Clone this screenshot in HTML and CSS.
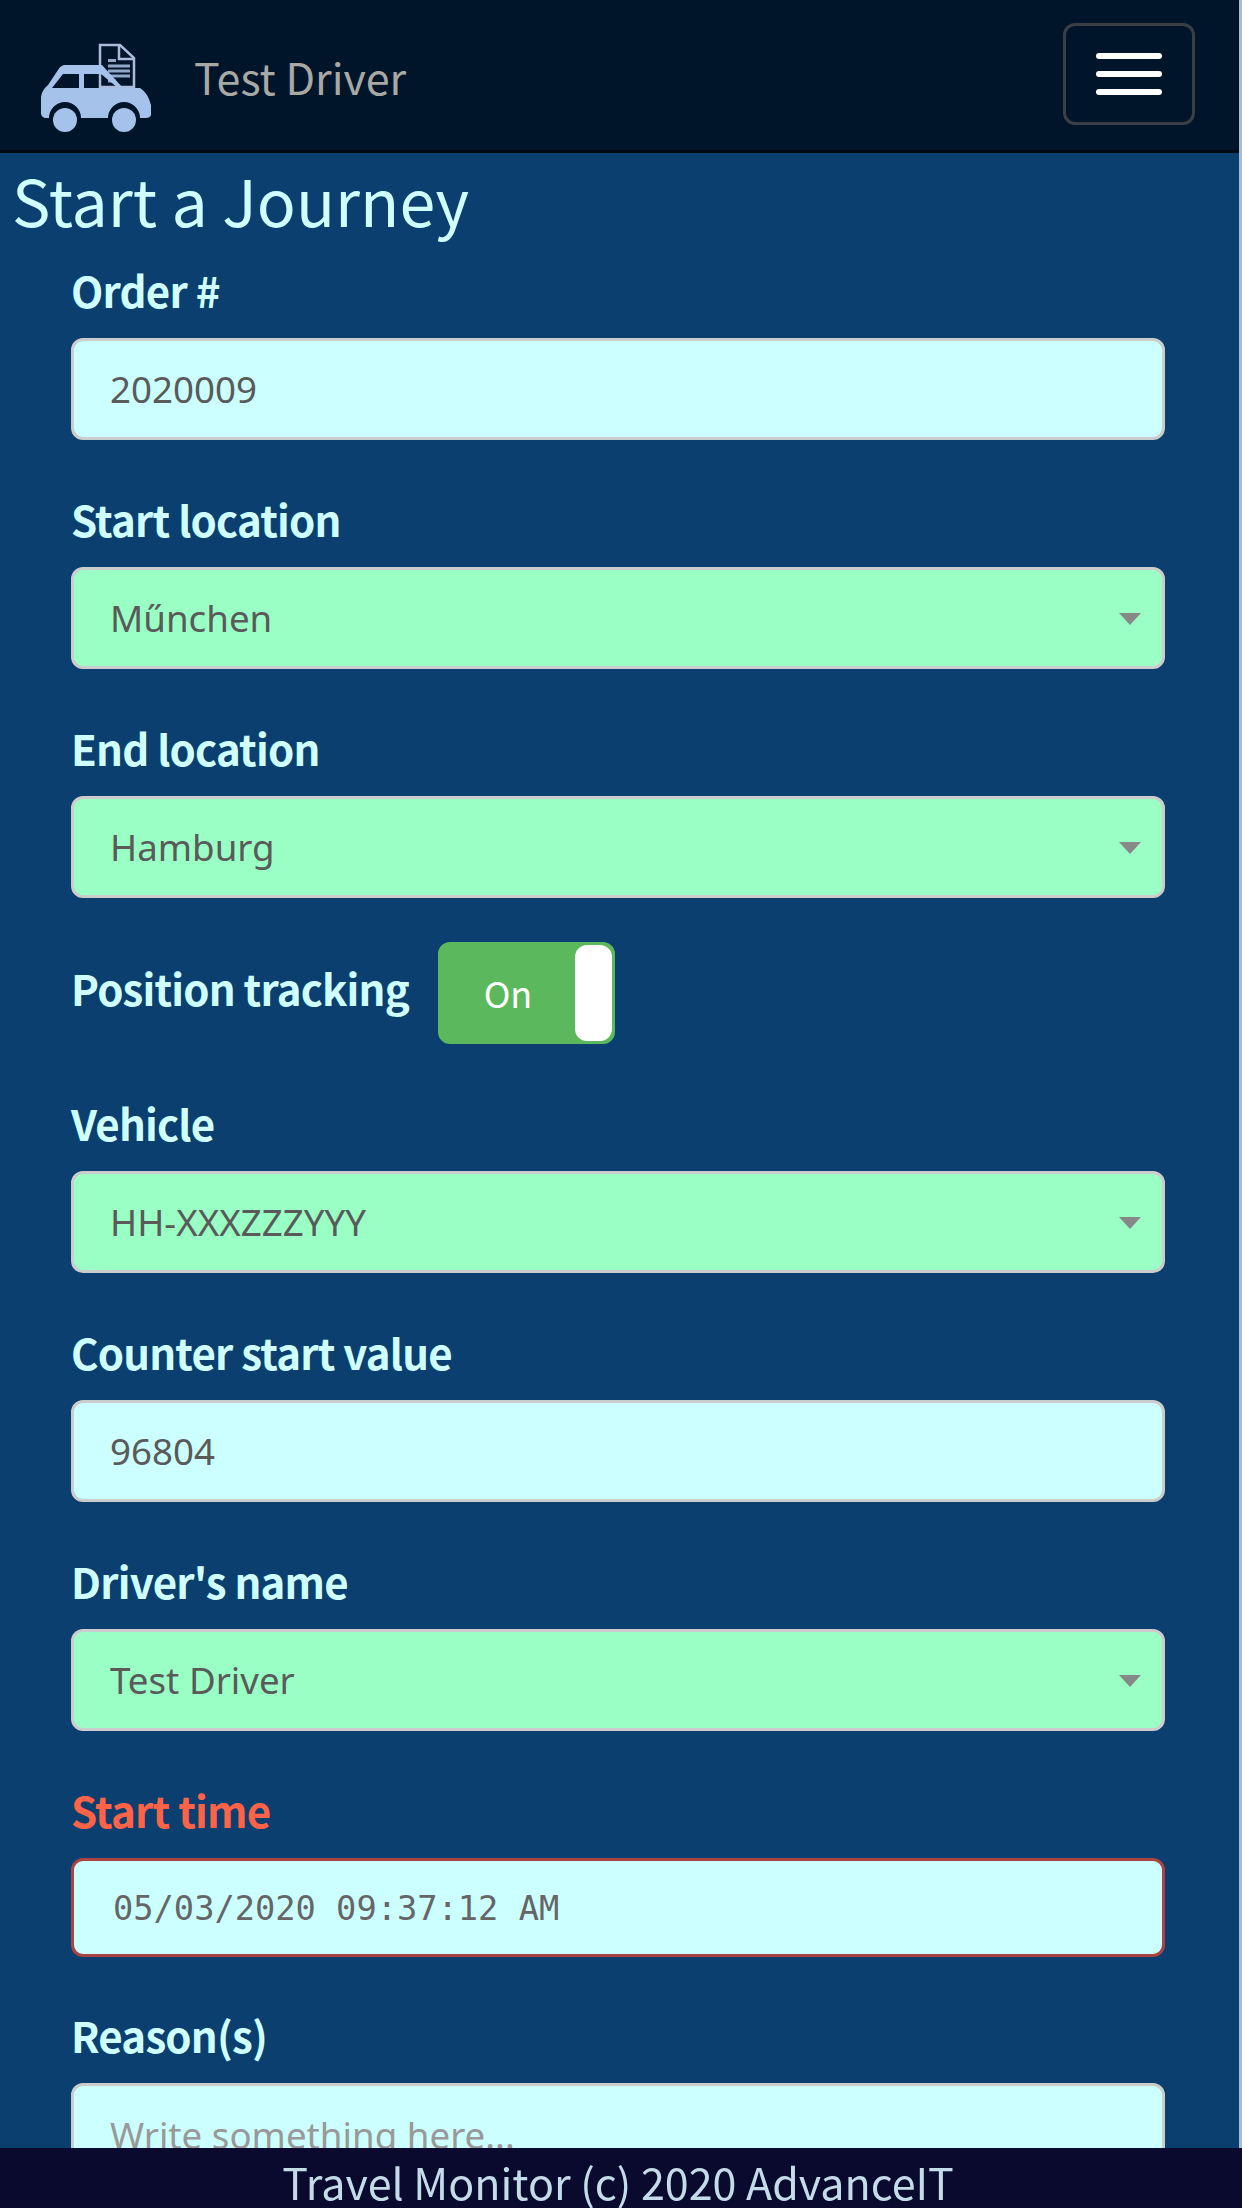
FILE: index.html
```html
<!DOCTYPE html>
<html lang="en">
<head>
  <meta charset="UTF-8">
  <title>Travel Monitor</title>
  <link rel="stylesheet" href="styles.css">
</head>
<body>
  <nav class="navbar">
    <div class="brand">
      <svg class="brand-icon" viewBox="0 0 112 92" width="112" height="92">
        <path class="doc" d="M60 2 H80 L94 15 V44 H60 Z"></path>
        <path class="doc-fold" d="M79 3 V16 H93"></path>
        <path class="doc-line" d="M68 17.5 H76 M68 23 H90 M68 28 H90 M68 33 H90 M68 38 H76"></path>
        <path class="car" fill-rule="evenodd" d="M24 22 H62 L83 45 H100 Q108 50 111 62 V72 Q110 75 106 75 H100 A16 16 0 0 0 68 75 H41 A16 16 0 0 0 9 75 H5 Q1 74 1 70 V54 Q2 47 8 42 L18 27 Q20 23 24 22 Z M23 31 L12 45 H39 V31 Z M44 31 V45 H78 L61 31 Z"></path>
        <circle class="car" cx="25" cy="77" r="12"></circle>
        <circle class="car" cx="84" cy="77" r="12"></circle>
      </svg>
      <span class="brand-name">Test Driver</span>
    </div>
    <button class="menu-toggle" type="button" aria-label="Menu">
      <span class="menu-bar"></span>
      <span class="menu-bar"></span>
      <span class="menu-bar"></span>
    </button>
  </nav>

  <h1 class="page-title">Start a Journey</h1>

  <form class="journey-form">
    <div class="form-group">
      <label>Order #</label>
      <input class="field" type="text" value="2020009">
    </div>
    <div class="form-group">
      <label>Start location</label>
      <div class="select-wrap">
        <select class="field field-select"><option>Műnchen</option></select>
      </div>
    </div>
    <div class="form-group">
      <label>End location</label>
      <div class="select-wrap">
        <select class="field field-select"><option>Hamburg</option></select>
      </div>
    </div>
    <div class="form-group tracking-row">
      <label>Position tracking</label>
      <div class="switch">
        <span class="switch-label">On</span>
        <span class="switch-knob"></span>
      </div>
    </div>
    <div class="form-group">
      <label>Vehicle</label>
      <div class="select-wrap">
        <select class="field field-select"><option>HH-XXXZZZYYY</option></select>
      </div>
    </div>
    <div class="form-group">
      <label>Counter start value</label>
      <input class="field" type="text" value="96804">
    </div>
    <div class="form-group">
      <label>Driver's name</label>
      <div class="select-wrap">
        <select class="field field-select"><option>Test Driver</option></select>
      </div>
    </div>
    <div class="form-group has-error">
      <label>Start time</label>
      <input class="field field-time" type="text" value="05/03/2020 09:37:12 AM">
    </div>
    <div class="form-group">
      <label>Reason(s)</label>
      <textarea class="field field-area" placeholder="Write something here..."></textarea>
    </div>
  </form>

  <footer class="footer">Travel Monitor (c) 2020 AdvanceIT</footer>
</body>
</html>
```

FILE: styles.css
```css
html, body {
  height: 100%;
}
body {
  margin: 0;
  background-color: #0a3f6f;
  color: #d0ffff;
  font-family: "Noto Sans CJK SC", "Noto Sans", sans-serif;
  overflow: hidden;
}
/* thin pale strip down the right edge of the window */
body::after {
  content: "";
  position: fixed;
  top: 0;
  right: 0;
  bottom: 60px;
  width: 3px;
  background-color: #a9bdd0;
}

/* top bar */
.navbar {
  height: 150px;
  background-color: #001529;
  border-bottom: 3px solid #000a14;
  display: flex;
  align-items: center;
  justify-content: space-between;
  padding: 0 47px 0 40px;
}
.brand {
  display: flex;
  align-items: center;
  gap: 42px;
}
.brand-icon {
  display: block;
  margin-top: 28px;
}
.car {
  fill: #a4c2ea;
}
.doc {
  fill: #001529;
  stroke: #a9bcdc;
  stroke-width: 2.5;
}
.doc-fold {
  fill: none;
  stroke: #a9bcdc;
  stroke-width: 2.5;
}
.doc-line {
  fill: none;
  stroke: #8fa8c8;
  stroke-width: 3;
}
.brand-name {
  color: #a8a8a4;
  font-size: 43px;
  line-height: 60px;
  margin-top: 2px;
}
.menu-toggle {
  width: 132px;
  height: 102px;
  margin-top: -2px;
  padding: 0;
  background: transparent;
  border: 3px solid #3a3f46;
  border-radius: 12px;
  display: flex;
  flex-direction: column;
  align-items: center;
  justify-content: center;
  gap: 12px;
}
.menu-bar {
  display: block;
  width: 66px;
  height: 6px;
  background-color: #fff;
  border-radius: 3px;
}

/* form */
.page-title {
  margin: 0;
  padding-left: 12px;
  height: 103px;
  font-size: 64.5px;
  font-weight: 400;
  line-height: 92px;
}
.journey-form {
  padding: 0 77px 0 71px;
}
.form-group {
  margin-bottom: 44.8px;
}
label {
  display: block;
  height: 67px;
  margin-bottom: 15px;
  font-size: 42px;
  font-weight: 700;
  line-height: 68px;
  letter-spacing: -0.8px;
}
.field {
  display: block;
  width: 100%;
  height: 102px;
  box-sizing: border-box;
  padding: 0 36px;
  margin: 0;
  border: 3px solid #ccc;
  border-radius: 12px;
  background-color: #ccffff;
  color: #5a5a5a;
  font-family: "Noto Sans", sans-serif;
  font-size: 36.7px;
  outline: none;
}
.select-wrap {
  position: relative;
}
.select-wrap::after {
  content: "";
  position: absolute;
  right: 24px;
  top: 46px;
  border-left: 11px solid transparent;
  border-right: 11px solid transparent;
  border-top: 12px solid #888;
}
.field-select {
  appearance: none;
  background-color: #99ffc4;
}
.tracking-row {
  display: flex;
  align-items: center;
  gap: 29px;
  height: 102px;
}
.tracking-row label {
  margin: 0 0 12px;
}
.switch {
  width: 177px;
  height: 102px;
  box-sizing: border-box;
  border: 3px solid #5cb85c;
  border-radius: 12px;
  background-color: #5cb85c;
  display: flex;
  align-items: stretch;
}
.switch-label {
  flex: 1;
  text-align: center;
  color: #fff;
  font-size: 36px;
  line-height: 94px;
}
.switch-knob {
  width: 37px;
  background-color: #fff;
  border-radius: 12px;
}
.has-error label {
  color: #ff6347;
}
.has-error .field {
  border-color: #a94442;
}
.field-time {
  height: 99px;
  margin-bottom: 3px;
  padding: 3px 36px 0 39px;
  font-family: "DejaVu Sans Mono", monospace;
  font-size: 33.7px;
  color: #666;
}
.field-area {
  height: 200px;
  padding-top: 24px;
  resize: none;
}
.field-area::placeholder {
  color: #999;
}

.footer {
  position: fixed;
  left: 0;
  right: 0;
  bottom: 0;
  height: 60px;
  padding-right: 6px;
  background-color: #0a0a2e;
  color: #c4dbe8;
  font-size: 43px;
  line-height: 66px;
  text-align: center;
}
```
